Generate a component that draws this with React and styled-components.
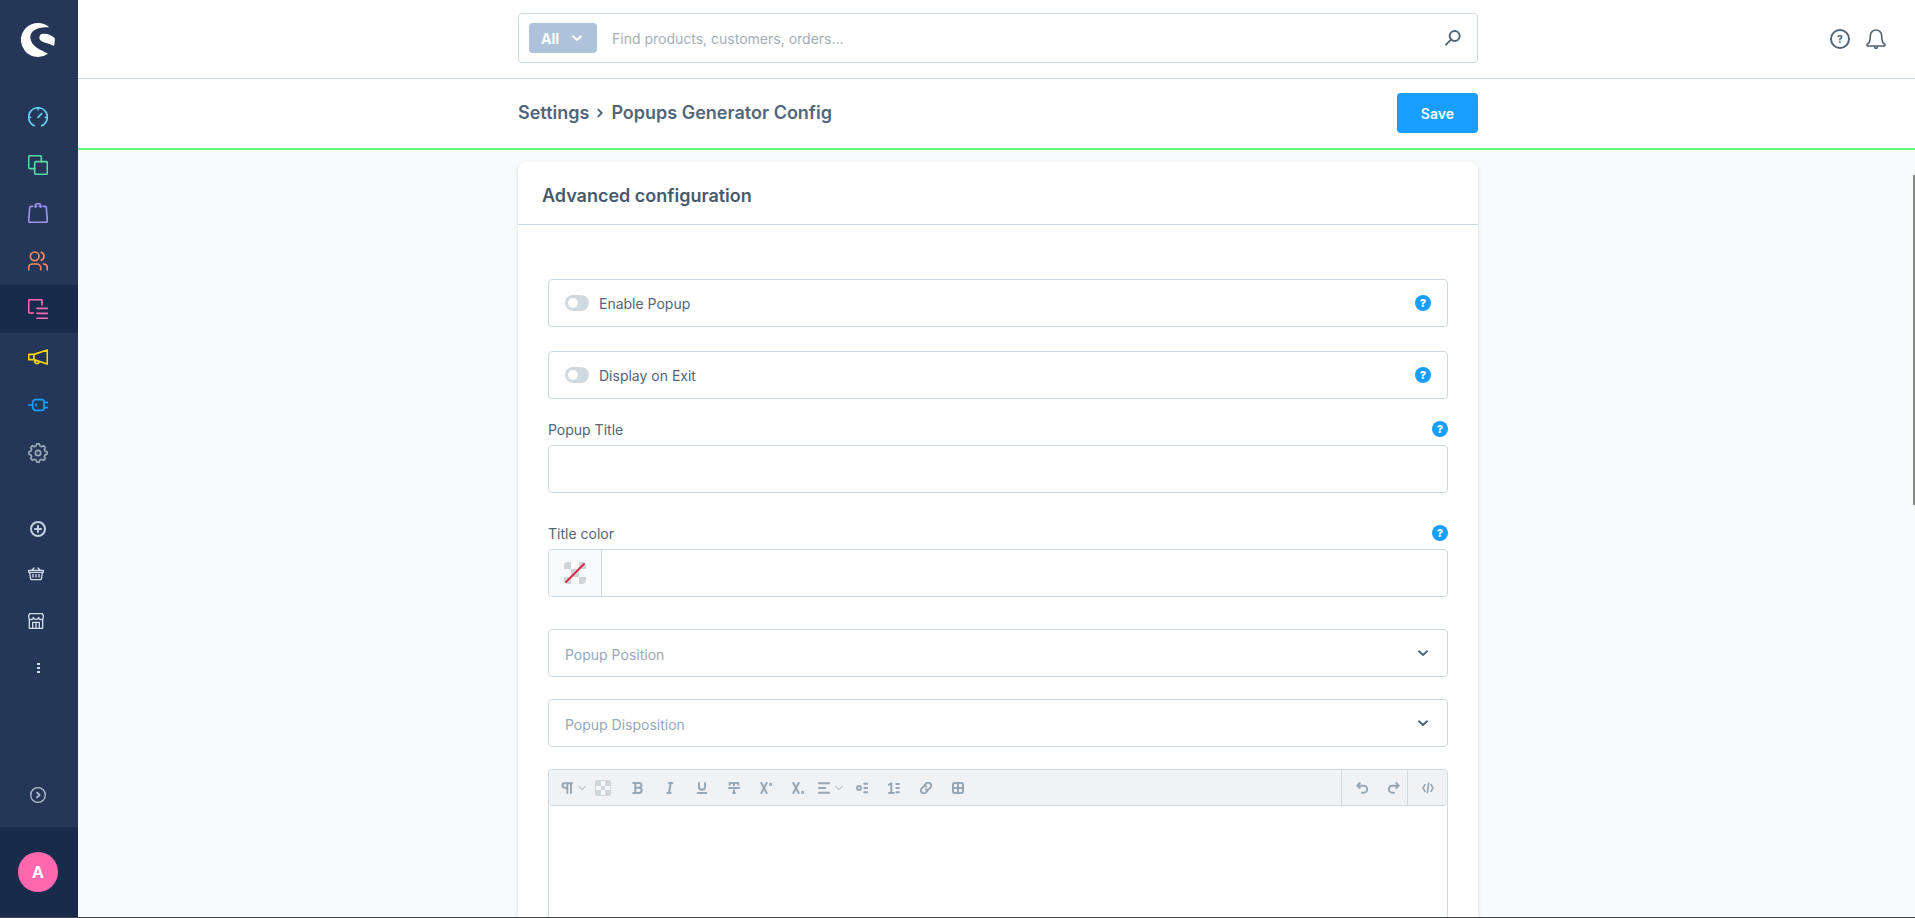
import React, { useState } from 'react';
import styled, { createGlobalStyle } from 'styled-components';

const GlobalStyle = createGlobalStyle`
    * {
        box-sizing: border-box;
    }

    body {
        margin: 0;
        font-family: Inter, "Liberation Sans", sans-serif;
        font-size: 14px;
        color: #52667a;
    }

    button, input, select, textarea {
        margin: 0;
        padding: 0;
        border: 0;
        background: none;
        font: inherit;
        color: inherit;
    }

    button {
        cursor: pointer;
    }
`;

const Layout = styled.div`
    display: flex;
    height: 100vh;
    overflow: hidden;
    border-bottom: 1px solid #46484a;
    background-color: #f9fafb;
`;

const Sidebar = styled.aside`
    flex: none;
    width: 78px;
    display: flex;
    flex-direction: column;
    background-color: #243758;
`;

const LogoLink = styled.a`
    display: block;
    height: 34px;
    margin: 23px 0 36px 21px;
`;

const MainNav = styled.nav`
    display: flex;
    flex-direction: column;
    margin-bottom: 31px;
`;

const NavLink = styled.a`
    height: 48px;
    display: flex;
    align-items: center;
    padding-left: 28px;
    color: ${props => props.$color};
    background-color: ${props => props.$active ? '#182b4d' : 'transparent'};
`;

const ExtraNav = styled.nav`
    display: flex;
    flex-direction: column;
    flex: 1;
    color: #d3dde9;
`;

const AddButton = styled.button`
    height: 42px;
    display: flex;
    align-items: center;
    padding-left: 30px;
    color: #c3d0e0;
`;

const ExtraLink = styled.a`
    height: 47px;
    display: flex;
    align-items: center;
    padding-left: ${props => props.$indented ? '30px' : '28px'};
    color: inherit;
`;

const CollapseButton = styled.button`
    height: 64px;
    display: flex;
    align-items: center;
    padding-left: 30px;
    color: #b3c1d3;
`;

const UserArea = styled.div`
    height: 90px;
    display: flex;
    align-items: center;
    padding-left: 18px;
    background-color: #182b4d;
`;

const Avatar = styled.button`
    width: 40px;
    height: 40px;
    border-radius: 50%;
    background-color: #ff68ac;
    color: #fff;
    font-size: 16px;
    font-weight: 700;
`;

const Page = styled.div`
    position: relative;
    flex: 1;
    min-width: 0;
    display: flex;
    flex-direction: column;
`;

const Bar = styled.header`
    display: grid;
    grid-template-columns: 1fr minmax(0, 960px) 1fr;
    align-items: center;
    padding-left: 3px;
    background-color: #fff;
`;

const TopBar = styled(Bar)`
    height: 79px;
    padding-bottom: 2px;
    border-bottom: 1px solid #d1d9e0;
`;

const SmartBar = styled(Bar)`
    height: 71px;
    padding-bottom: 1px;
    border-bottom: 2px solid #60fa7c;
`;

const SearchBox = styled.form`
    grid-column: 2;
    height: 50px;
    display: flex;
    align-items: center;
    padding: 0 16px 0 10px;
    border: 1px solid #d1d9e0;
    border-radius: 4px;
`;

const SearchType = styled.button`
    height: 30px;
    width: 68px;
    display: flex;
    align-items: center;
    justify-content: space-between;
    padding: 0 15px 0 12px;
    border-radius: 4px;
    background-color: #aec3db;
    color: #fff;
    font-weight: 700;
`;

const SearchInput = styled.input`
    flex: 1;
    min-width: 0;
    height: 30px;
    padding: 0 15px;
    outline: none;

    &::placeholder {
        color: #a3afbb;
        opacity: 1;
    }
`;

const IconButton = styled.button`
    display: flex;
    color: #52667a;
`;

const TopActions = styled.div`
    grid-column: 3;
    justify-self: end;
    display: flex;
    align-items: center;
    gap: 16px;
    padding: 2px 29px 0 0;
`;

const RoundHelp = styled.button`
    width: 20px;
    height: 20px;
    border: 2px solid #52667a;
    border-radius: 50%;
    font-size: 10px;
    line-height: 16px;
    font-weight: 800;
`;

const BarContent = styled.div`
    grid-column: 2;
    display: flex;
    align-items: center;
    justify-content: space-between;
`;

const PageTitle = styled.h2`
    margin: 0;
    display: flex;
    align-items: center;
    gap: 6px;
    font-size: 18px;
    line-height: 24px;
    font-weight: 600;
`;

const TitleLink = styled.a`
    color: inherit;
    text-decoration: none;
`;

const SaveButton = styled.button`
    height: 40px;
    padding: 0 24px;
    border-radius: 4px;
    background-color: #189eff;
    color: #fff;
    font-weight: 600;
`;

const Content = styled.main`
    flex: 1;
    min-height: 0;
    overflow-y: auto;
    scrollbar-width: none;
    display: grid;
    grid-template-columns: minmax(0, 960px);
    justify-content: center;
    align-items: start;
    padding: 12px 0 40px 3px;
`;

const ScrollThumb = styled.div`
    position: absolute;
    top: 175px;
    right: 0;
    width: 2px;
    height: 330px;
    background-color: #868886;
`;

const Card = styled.section`
    border-radius: 8px;
    background-color: #fff;
    box-shadow: 0 1px 1px rgba(0, 0, 0, 0.08), 0 2px 4px rgba(0, 0, 0, 0.12);
`;

const CardHeader = styled.header`
    height: 63px;
    display: flex;
    align-items: center;
    padding: 5px 24px 0;
    border-bottom: 1px solid #d1d9e0;
`;

const CardTitle = styled.h3`
    margin: 0;
    font-size: 18px;
    line-height: 24px;
    font-weight: 600;
    color: #475a6d;
`;

const CardBody = styled.div`
    display: flex;
    flex-direction: column;
    padding: 54px 30px 30px;
`;

const SwitchList = styled.div`
    display: flex;
    flex-direction: column;
    gap: 24px;
    margin-bottom: 22px;
`;

const SwitchRow = styled.div`
    height: 48px;
    display: flex;
    align-items: center;
    justify-content: space-between;
    padding: 0 16px;
    border: 1px solid #d1d9e0;
    border-radius: 4px;
`;

const SwitchLabel = styled.label`
    display: flex;
    align-items: center;
    gap: 10px;
    line-height: 20px;
`;

const SwitchText = styled.span`
    padding-top: 2px;
`;

const Switch = styled.input`
    appearance: none;
    width: 24px;
    height: 16px;
    padding: 3px;
    border-radius: 8px;
    background-color: #d1d9e0;

    &::before {
        content: "";
        display: block;
        width: 10px;
        height: 10px;
        border-radius: 50%;
        background-color: #fff;
    }

    &:checked {
        padding-left: 11px;
        background-color: #189eff;
    }
`;

const HelpButton = styled.button`
    width: 16px;
    height: 16px;
    border-radius: 50%;
    background-color: #189eff;
    color: #fff;
    font-size: 11px;
    line-height: 16px;
    font-weight: 800;
`;

const Field = styled.div`
    margin-bottom: 32px;
`;

const FieldHead = styled.div`
    height: 24px;
    display: flex;
    align-items: flex-start;
    justify-content: space-between;
    line-height: 18px;
`;

const TextInput = styled.input`
    display: block;
    width: 100%;
    height: 48px;
    padding: 0 16px;
    border: 1px solid #d1d9e0;
    border-radius: 4px;
    outline: none;
`;

const ColorBox = styled.div`
    height: 48px;
    display: flex;
    border: 1px solid #d1d9e0;
    border-radius: 4px;
    overflow: hidden;
`;

const ColorTrigger = styled.button`
    width: 53px;
    display: flex;
    align-items: center;
    justify-content: center;
    border-right: 1px solid #d1d9e0;
    background-color: #f9fafb;
`;

const ColorInput = styled.input`
    flex: 1;
    min-width: 0;
    padding: 0 16px;
    outline: none;
`;

const SelectBox = styled.div`
    display: grid;
    grid-template-columns: 1fr 30px;
    align-items: center;
    margin-bottom: 22px;

    svg {
        grid-area: 1 / 2;
        pointer-events: none;
    }
`;

const Select = styled.select`
    grid-area: 1 / 1 / 2 / 3;
    appearance: none;
    height: 48px;
    padding: 2px 16px 0;
    border: 1px solid #d1d9e0;
    border-radius: 4px;
    color: #98a9b9;
    outline: none;
`;

const Editor = styled.div`
    border: 1px solid #d1d9e0;
    border-radius: 4px;
`;

const Toolbar = styled.div`
    height: 36px;
    display: flex;
    align-items: stretch;
    padding-left: 8px;
    border-bottom: 1px solid #d1d9e0;
    border-radius: 4px;
    background-color: #f0f2f5;
    color: #98a7b5;
`;

const ToolButton = styled.button`
    width: 32px;
    display: flex;
    align-items: center;
    justify-content: center;
    gap: 5px;
`;

const ColorTool = styled(ToolButton)`
    width: 16px;
    margin: 0 11px 0 6px;
`;

const ToolGroup = styled.div`
    display: flex;
    align-items: stretch;
    border-left: 1px solid #d1d9e0;
`;

const HistoryGroup = styled(ToolGroup)`
    gap: 6px;
    margin-left: auto;
    padding-left: 7px;

    ${ToolButton} {
        width: 26px;
    }
`;

const CodeGroup = styled(ToolGroup)`
    ${ToolButton} {
        width: 39px;
    }
`;

const EditorArea = styled.textarea`
    display: block;
    width: 100%;
    height: 240px;
    padding: 16px;
    resize: none;
    outline: none;
`;

// icons are drawn on a grid of three units to the pixel
function Icon({ size = 20, stroke = 5, children }) {
    return (
        <svg
            width={size}
            height={size}
            viewBox={`0 0 ${size * 3} ${size * 3}`}
            fill="none"
            stroke="currentColor"
            strokeWidth={stroke}
            strokeLinecap="round"
            strokeLinejoin="round"
            aria-hidden="true"
        >
            {children}
        </svg>
    );
}

function gearPath() {
    const points = [];
    for (let i = 0; i < 8; i++) {
        const a = i * Math.PI / 4;
        [[-0.26, 22], [-0.14, 27.5], [0.14, 27.5], [0.26, 22]].forEach(([d, r]) => {
            points.push(`${(30 + r * Math.sin(a + d)).toFixed(1)} ${(30 - r * Math.cos(a + d)).toFixed(1)}`);
        });
    }
    return `M${points.join('L')}Z`;
}

function Logo() {
    return (
        <svg width="34" height="34" viewBox="0 0 102 102" fill="#fff" aria-hidden="true">
            <path d="M85 13A51 51 0 1 0 81 92C60 81 28 70 28 42C28 22 52 10 85 13Z"/>
            <path d="M55 44C55 36 59 32 67 32C80 31 93 37 101 45C102 53 101 61 99 69C83 58 55 60 55 44Z"/>
        </svg>
    );
}

const navItems = [
    {
        label: 'Dashboard', color: '#66d0ef',
        icon: <path d="M19 56A28 28 0 1 1 41 56M2 31H8M52 31H58M30 3V8M30 31L41 20"/>
    },
    {
        label: 'Catalogues', color: '#57d9a3',
        icon: <><rect x="20" y="20" width="38" height="38" rx="4"/><path d="M20 41H6a4 4 0 0 1-4-4V6a4 4 0 0 1 4-4H36a4 4 0 0 1 4 4V20"/></>
    },
    {
        label: 'Orders', color: '#a092f0',
        icon: <path d="M14 10H9a4 4 0 0 0-4 4L2 54a4 4 0 0 0 4 4H54a4 4 0 0 0 4-4L55 14a4 4 0 0 0-4-4H45M22 13V8a6 6 0 0 1 6-6h4a6 6 0 0 1 6 6V13M22 10H26M34 10H38"/>
    },
    {
        label: 'Customers', color: '#f88962',
        icon: <><circle cx="20" cy="16" r="13"/><path d="M40 4A13 13 0 0 1 40 28M2 56V50a11 11 0 0 1 11-11H27a11 11 0 0 1 11 11V56M46 39A12 12 0 0 1 58 50V56"/></>
    },
    {
        label: 'Content', color: '#ff68b4', active: true,
        icon: <path d="M16 42H6a4 4 0 0 1-4-4V6a4 4 0 0 1 4-4H38a4 4 0 0 1 4 4V17M27 28H58M27 43H58M27 58H58"/>
    },
    {
        label: 'Marketing', color: '#ffd700',
        icon: <path d="M18 22L58 9V51L18 38ZM18 22H2V38H18M20 40V44A7 7 0 0 0 33 46"/>
    },
    {
        label: 'Extensions', color: '#189eff',
        icon: <path d="M2 30H14M20 14H42a6 6 0 0 1 6 6V40a6 6 0 0 1-6 6H20L14 40V20ZM48 22H58M48 38H58M24 27V33"/>
    },
    {
        label: 'Settings', color: '#9aa8b5',
        icon: <><path d={gearPath()}/><circle cx="30" cy="30" r="8"/></>
    }
];

function ChevronDown() {
    return <Icon size={10} stroke={6}><path d="M3 10L15 21L27 10"/></Icon>;
}

function ThinChevron() {
    return <Icon size={8} stroke={3}><path d="M2 7L12 17L22 7"/></Icon>;
}

function Help({ topic }) {
    return <HelpButton type="button" aria-label={`Help: ${topic}`}>?</HelpButton>;
}

function SwitchField({ id, label }) {
    const [on, setOn] = useState(false);

    return (
        <SwitchRow>
            <SwitchLabel htmlFor={id}>
                <Switch id={id} type="checkbox" role="switch" checked={on} onChange={() => setOn(!on)}/>
                <SwitchText>{label}</SwitchText>
            </SwitchLabel>
            <Help topic={label}/>
        </SwitchRow>
    );
}

function SelectField({ label }) {
    return (
        <SelectBox>
            <Select aria-label={label} defaultValue="">
                <option value="">{label}</option>
            </Select>
            <ChevronDown/>
        </SelectBox>
    );
}

function Tool({ label, children, menu }) {
    return (
        <ToolButton type="button" aria-label={label}>
            <Icon size={12} stroke={6}>{children}</Icon>
            {menu && <ThinChevron/>}
        </ToolButton>
    );
}

function AppSidebar() {
    return (
        <Sidebar>
            <LogoLink href="#" aria-label="Home"><Logo/></LogoLink>
            <MainNav>
                {navItems.map(item => (
                    <NavLink key={item.label} href="#" aria-label={item.label} $color={item.color} $active={item.active}>
                        <Icon>{item.icon}</Icon>
                    </NavLink>
                ))}
            </MainNav>
            <ExtraNav>
                <AddButton type="button" aria-label="Add">
                    <Icon size={16} stroke={6}><circle cx="24" cy="24" r="21"/><path d="M24 15V33M15 24H33"/></Icon>
                </AddButton>
                <ExtraLink href="#" aria-label="Sales channel">
                    <Icon size={16} stroke={4}>
                        <path d="M2 13H46V19H2ZM5 20L8 39a3 3 0 0 0 3 2H37a3 3 0 0 0 3-2L43 20M15 25V33M24 25V33M33 25V33M12 12L18 6M36 12L30 6"/>
                    </Icon>
                </ExtraLink>
                <ExtraLink href="#" aria-label="Storefront">
                    <Icon size={16} stroke={4}>
                        <path d="M5 2H43L46 8V13A7 7 0 0 1 32 13A8 6 0 0 1 16 13A7 7 0 0 1 2 13V8ZM4 20V46H44V20M14 46V28H34V46M24 28V46"/>
                    </Icon>
                </ExtraLink>
                <ExtraLink href="#" aria-label="More" $indented>
                    <svg width="16" height="16" fill="currentColor" aria-hidden="true">
                        <rect x="7" y="3" width="3" height="2"/>
                        <rect x="7" y="7" width="3" height="2"/>
                        <rect x="7" y="11" width="3" height="2"/>
                    </svg>
                </ExtraLink>
            </ExtraNav>
            <CollapseButton type="button" aria-label="Expand menu">
                <Icon size={16} stroke={4}><circle cx="24" cy="24" r="22"/><path d="M21 17L29 24L21 31" strokeWidth="5"/></Icon>
            </CollapseButton>
            <UserArea>
                <Avatar type="button">A</Avatar>
            </UserArea>
        </Sidebar>
    );
}

function TextEditor() {
    return (
        <Editor>
            <Toolbar role="toolbar" aria-label="Text formatting">
                <Tool label="Paragraph" menu>
                    <path d="M33 4H11a6 6 0 0 0 0 13H17M19 4V33M30 4V33"/>
                </Tool>
                <ColorTool type="button" aria-label="Text color">
                    <svg width="16" height="16" aria-hidden="true">
                        <rect width="16" height="16" rx="2" fill="#cfd7dd"/>
                        <path d="M6 1h4v5h5v4h-5v5h-4v-5h-5v-4h5z" fill="#f5f7fa"/>
                        <rect x="6" y="6" width="4" height="4" fill="#cfd7dd"/>
                    </svg>
                </ColorTool>
                <Tool label="Bold">
                    <path d="M4 3H21a7 7 0 0 1 0 14H10M21 17a8 8 0 0 1 0 16H4M10 3V33"/>
                </Tool>
                <Tool label="Italic"><path d="M15 3H25M10 33H20M20 3L15 33"/></Tool>
                <Tool label="Underline"><path d="M9 3V14a9 9 0 0 0 18 0V3M5 33H31"/></Tool>
                <Tool label="Strikethrough">
                    <path d="M5 8V3H31V8M18 3V10M3 18H33M18 25V33M15 33H21"/>
                </Tool>
                <Tool label="Superscript"><path d="M4 3L20 33M20 3L4 33"/><circle cx="32" cy="7" r="2"/></Tool>
                <Tool label="Subscript"><path d="M4 3L20 33M20 3L4 33"/><circle cx="32" cy="31" r="2"/></Tool>
                <Tool label="Align" menu><path d="M3 4H33M3 18H22M3 32H33"/></Tool>
                <Tool label="Bullet list"><circle cx="9" cy="18" r="6"/><path d="M25 5H34M25 18H34M25 31H34"/></Tool>
                <Tool label="Numbered list"><path d="M3 8L10 4V33M3 33H17M25 6H33M25 18H33M25 31H33"/></Tool>
                <Tool label="Link">
                    <path d="M14 9L18 5a8 8 0 0 1 13 12L26 22a7 7 0 0 1-9 0M22 27L18 31a8 8 0 0 1-13-12L10 14a7 7 0 0 1 9 0"/>
                </Tool>
                <Tool label="Table"><rect x="3" y="3" width="30" height="30" rx="4"/><path d="M18 3V33M3 18H33"/></Tool>
                <HistoryGroup>
                    <Tool label="Undo"><path d="M4 11H23a9 9 0 0 1 0 21H18M11 3L4 11L11 18"/></Tool>
                    <Tool label="Redo"><path d="M32 11H13a9 9 0 0 0 0 21H18M25 3L32 11L25 18"/></Tool>
                </HistoryGroup>
                <CodeGroup>
                    <Tool label="Source code"><path d="M9 8L3 18L9 28M27 8L33 18L27 28M20 4L16 32" strokeWidth="5"/></Tool>
                </CodeGroup>
            </Toolbar>
            <EditorArea aria-label="Popup text"/>
        </Editor>
    );
}

function ConfigCard() {
    return (
        <Card>
            <CardHeader>
                <CardTitle>Advanced configuration</CardTitle>
            </CardHeader>
            <CardBody>
                <SwitchList>
                    <SwitchField id="enable-popup" label="Enable Popup"/>
                    <SwitchField id="display-exit" label="Display on Exit"/>
                </SwitchList>
                <Field>
                    <FieldHead>
                        <label htmlFor="popup-title">Popup Title</label>
                        <Help topic="Popup Title"/>
                    </FieldHead>
                    <TextInput id="popup-title" type="text"/>
                </Field>
                <Field>
                    <FieldHead>
                        <label htmlFor="title-color">Title color</label>
                        <Help topic="Title color"/>
                    </FieldHead>
                    <ColorBox>
                        <ColorTrigger type="button" aria-label="Pick a color">
                            <svg width="22" height="22" aria-hidden="true">
                                <path d="M4 0h3v7h-7v-3a4 4 0 0 1 4-4zM15 0h3a4 4 0 0 1 4 4v3h-7zM7 7h8v8h-8zM0 15h7v7h-3a4 4 0 0 1-4-4zM15 15h7v3a4 4 0 0 1-4 4h-3z" fill="#cdd5db"/>
                                <path d="M2 20L20 2" stroke="#de294c" strokeWidth="2" strokeLinecap="round"/>
                            </svg>
                        </ColorTrigger>
                        <ColorInput id="title-color" type="text"/>
                    </ColorBox>
                </Field>
                <SelectField label="Popup Position"/>
                <SelectField label="Popup Disposition"/>
                <TextEditor/>
            </CardBody>
        </Card>
    );
}

function App() {
    return (
        <Layout>
            <GlobalStyle/>
            <AppSidebar/>
            <Page>
                <TopBar>
                    <SearchBox role="search" onSubmit={e => e.preventDefault()}>
                        <SearchType type="button">All<ChevronDown/></SearchType>
                        <SearchInput type="text" aria-label="Search" placeholder="Find products, customers, orders..."/>
                        <IconButton type="submit" aria-label="Search">
                            <Icon size={16} stroke={6}><circle cx="29" cy="18" r="15"/><path d="M18 29L3 44"/></Icon>
                        </IconButton>
                    </SearchBox>
                    <TopActions>
                        <RoundHelp type="button" aria-label="Help center">?</RoundHelp>
                        <IconButton type="button" aria-label="Notifications">
                            <Icon>
                                <path d="M30 3A17 17 0 0 1 47 20C47 36 50 42 56 46A3 3 0 0 1 55 51H5A3 3 0 0 1 4 46C10 42 13 36 13 20A17 17 0 0 1 30 3ZM26 54A4 4 0 0 0 34 54"/>
                            </Icon>
                        </IconButton>
                    </TopActions>
                </TopBar>
                <SmartBar>
                    <BarContent>
                        <PageTitle>
                            <TitleLink href="#">Settings</TitleLink>
                            <Icon size={10} stroke={6}><path d="M10 5L20 15L10 25"/></Icon>
                            <span>Popups Generator Config</span>
                        </PageTitle>
                        <SaveButton type="button">Save</SaveButton>
                    </BarContent>
                </SmartBar>
                <Content>
                    <ConfigCard/>
                </Content>
                <ScrollThumb/>
            </Page>
        </Layout>
    );
}

export default App;
